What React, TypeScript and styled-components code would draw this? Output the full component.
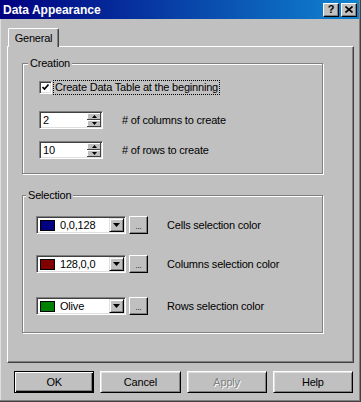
import styled, { createGlobalStyle } from "styled-components";

type GroupProps = {
  $height: number;
  $top?: number;
};

type LegendProps = {
  $indent: number;
};

type RowProps = {
  $top: number;
};

type PushButtonProps = {
  $default?: boolean;
  $disabled?: boolean;
};

const GlobalStyle = createGlobalStyle`
  body {
    margin: 0;
    font-family: "Liberation Sans", Arial, sans-serif;
  }
`;

const Window = styled.div`
  width: 361px;
  height: 402px;
  box-sizing: border-box;
  background: #c0c0c0;
  border-right: 1px solid #404040;
  border-bottom: 1px solid #404040;
  box-shadow: inset -1px -1px 0 #808080, inset 1px 0 0 #dfdfdf;
  display: flex;
  flex-direction: column;
  font-size: 11px;
  letter-spacing: -0.2px;
  color: #000;
`;

const TitleBar = styled.div`
  height: 19px;
  margin-right: 1px;
  padding: 0 2px 0 3px;
  background: linear-gradient(to right, #000080, #1084d0);
  display: flex;
  align-items: center;
  gap: 2px;
`;

const Title = styled.div`
  flex: 1;
  color: #fff;
  font-weight: bold;
  font-size: 12px;
  letter-spacing: 0;
`;

const CaptionButton = styled.div`
  width: 16px;
  height: 14px;
  box-sizing: border-box;
  background: #c0c0c0;
  border-top: 1px solid #fff;
  border-left: 1px solid #fff;
  border-right: 1px solid #000;
  border-bottom: 1px solid #000;
  box-shadow: inset -1px -1px 0 #808080;
  display: flex;
  align-items: center;
  justify-content: center;
  font-weight: bold;
  font-size: 11px;
  line-height: 1;
`;

const Body = styled.div`
  padding: 9px 6px 0 7px;
  display: flex;
  flex-direction: column;
`;

const TabStrip = styled.div`
  display: flex;
  padding-left: 1px;
`;

const Tab = styled.div`
  position: relative;
  z-index: 1;
  width: 51px;
  height: 19px;
  box-sizing: border-box;
  margin-bottom: -1px;
  background: #c0c0c0;
  border-top: 1px solid #fff;
  border-left: 1px solid #fff;
  border-right: 1px solid #404040;
  border-radius: 2px 2px 0 0;
  box-shadow: inset -1px 0 0 #808080;
  display: flex;
  align-items: center;
  justify-content: center;
`;

const Panel = styled.div`
  width: 347px;
  height: 317px;
  box-sizing: border-box;
  border-top: 1px solid #fff;
  border-left: 1px solid #fff;
  border-right: 1px solid #404040;
  border-bottom: 1px solid #404040;
  box-shadow: inset -1px -1px 0 #808080;
  padding: 10px 0 0 14px;
  display: flex;
  flex-direction: column;
`;

const Group = styled.fieldset<GroupProps>`
  margin: ${(p) => p.$top ?? 0}px 0 0 0;
  padding: 0;
  width: 301px;
  height: ${(p) => p.$height}px;
  box-sizing: border-box;
  min-width: 0;
  border: 1px solid #808080;
  box-shadow: inset 1px 1px 0 #fff, 1px 1px 0 #fff;
`;

const Legend = styled.legend<LegendProps>`
  margin-left: ${(p) => p.$indent}px;
  padding: 0 2px;
  line-height: 13px;
  background: #c0c0c0;
`;

const GroupBody = styled.div`
  display: flex;
  flex-direction: column;
`;

const CreationBody = styled(GroupBody)`
  padding: 10px 0 0 16px;
`;

const SelectionBody = styled(GroupBody)`
  padding: 14px 0 0 13px;
`;

const CheckRow = styled.div`
  display: flex;
  align-items: center;
  gap: 1px;
`;

const CheckBox = styled.div`
  width: 13px;
  height: 13px;
  box-sizing: border-box;
  background: #fff;
  border-top: 1px solid #808080;
  border-left: 1px solid #808080;
  border-right: 1px solid #fff;
  border-bottom: 1px solid #fff;
  box-shadow: inset 1px 1px 0 #404040, inset -1px -1px 0 #dfdfdf;
  display: flex;
  align-items: center;
  justify-content: center;
`;

const FocusLabel = styled.span`
  border: 1px dotted #000;
  padding: 0 1px;
  line-height: 13px;
`;

const FieldRow = styled.div<RowProps>`
  display: flex;
  align-items: center;
  margin-top: ${(p) => p.$top}px;
`;

const Spinner = styled.div`
  width: 64px;
  height: 18px;
  box-sizing: border-box;
  background: #fff;
  border-top: 1px solid #808080;
  border-left: 1px solid #808080;
  border-right: 1px solid #fff;
  border-bottom: 1px solid #fff;
  box-shadow: inset 1px 1px 0 #404040, inset -1px -1px 0 #dfdfdf;
  display: flex;
  padding: 1px;
`;

const SpinValue = styled.div`
  flex: 1;
  padding-left: 2px;
  line-height: 14px;
`;

const SpinButtons = styled.div`
  width: 14px;
  display: flex;
  flex-direction: column;
`;

const SpinButton = styled.div`
  flex: 1;
  background: #c0c0c0;
  box-shadow: inset -1px -1px 0 #404040, inset 1px 1px 0 #fff;
  display: flex;
  align-items: center;
  justify-content: center;
`;

const FieldLabel = styled.span`
  margin-left: 19px;
`;

const Combo = styled.div`
  width: 90px;
  height: 18px;
  box-sizing: border-box;
  background: #fff;
  border-top: 1px solid #808080;
  border-left: 1px solid #808080;
  border-right: 1px solid #fff;
  border-bottom: 1px solid #fff;
  box-shadow: inset 1px 1px 0 #404040, inset -1px -1px 0 #dfdfdf;
  display: flex;
  align-items: center;
  padding: 1px;
`;

const Swatch = styled.div<{ $color: string }>`
  width: 15px;
  height: 11px;
  margin-left: 2px;
  box-sizing: border-box;
  border: 1px solid #000;
  background: ${(p) => p.$color};
`;

const ComboText = styled.span`
  flex: 1;
  padding-left: 5px;
`;

const DropButton = styled.div`
  width: 15px;
  height: 14px;
  box-sizing: border-box;
  background: #c0c0c0;
  border-top: 1px solid #dfdfdf;
  border-left: 1px solid #dfdfdf;
  border-right: 1px solid #000;
  border-bottom: 1px solid #000;
  box-shadow: inset 1px 1px 0 #fff, inset -1px -1px 0 #808080;
  display: flex;
  align-items: center;
  justify-content: center;
`;

const DotsButton = styled.div`
  width: 19px;
  height: 18px;
  margin-left: 3px;
  box-sizing: border-box;
  background: #c0c0c0;
  border-top: 1px solid #fff;
  border-left: 1px solid #fff;
  border-right: 1px solid #000;
  border-bottom: 1px solid #000;
  box-shadow: inset -1px -1px 0 #808080;
  display: flex;
  align-items: flex-end;
  justify-content: center;
  font-size: 8px;
  line-height: 10px;
  padding-bottom: 1px;
`;

const ButtonRow = styled.div`
  display: grid;
  grid-template-columns: repeat(4, 1fr);
  column-gap: 6px;
  width: 339px;
  margin: 8px 0 0 7px;
`;

const PushButton = styled.div<PushButtonProps>`
  height: 22px;
  box-sizing: border-box;
  background: #c0c0c0;
  border-top: 1px solid ${(p) => (p.$default ? "#000" : "#fff")};
  border-left: 1px solid ${(p) => (p.$default ? "#000" : "#fff")};
  border-right: 1px solid #000;
  border-bottom: 1px solid #000;
  box-shadow: ${(p) =>
    p.$default
      ? "inset 1px 1px 0 #fff, inset -1px -1px 0 #000, inset -2px -2px 0 #808080"
      : "inset 1px 1px 0 #dfdfdf, inset -1px -1px 0 #808080"};
  display: flex;
  align-items: center;
  justify-content: center;
  color: ${(p) => (p.$disabled ? "#808080" : "#000")};
  text-shadow: ${(p) => (p.$disabled ? "1px 1px 0 #fff" : "none")};
`;

const Triangle = () => (
  <svg width="7" height="4" viewBox="0 0 7 4">
    <path d="M0 0h7L3.5 4z" fill="#000" />
  </svg>
);

const TinyArrow = ({ up }: { up?: boolean }) => (
  <svg width="5" height="3" viewBox="0 0 5 3">
    <path d={up ? "M2.5 0L5 3H0z" : "M0 0h5L2.5 3z"} fill="#000" />
  </svg>
);

const SpinField = ({ value, label, top }: { value: string; label: string; top: number }) => (
  <FieldRow $top={top}>
    <Spinner>
      <SpinValue>{value}</SpinValue>
      <SpinButtons>
        <SpinButton>
          <TinyArrow up />
        </SpinButton>
        <SpinButton>
          <TinyArrow />
        </SpinButton>
      </SpinButtons>
    </Spinner>
    <FieldLabel>{label}</FieldLabel>
  </FieldRow>
);

const ColorField = ({
  color,
  value,
  label,
  top,
}: {
  color: string;
  value: string;
  label: string;
  top: number;
}) => (
  <FieldRow $top={top}>
    <Combo>
      <Swatch $color={color} />
      <ComboText>{value}</ComboText>
      <DropButton>
        <Triangle />
      </DropButton>
    </Combo>
    <DotsButton>...</DotsButton>
    <FieldLabel>{label}</FieldLabel>
  </FieldRow>
);

const App = () => {
  return (
    <>
      <GlobalStyle />
      <Window>
        <TitleBar>
          <Title>Data Appearance</Title>
          <CaptionButton>?</CaptionButton>
          <CaptionButton>
            <svg width="8" height="7" viewBox="0 0 8 7">
              <path d="M0.5 0.5l7 6M7.5 0.5l-7 6" stroke="#000" strokeWidth="1.6" />
            </svg>
          </CaptionButton>
        </TitleBar>
        <Body>
          <TabStrip>
            <Tab>General</Tab>
          </TabStrip>
          <Panel>
            <Group $height={117}>
              <Legend $indent={5}>Creation</Legend>
              <CreationBody>
                <CheckRow>
                  <CheckBox>
                    <svg width="7" height="7" viewBox="0 0 7 7">
                      <path d="M0.5 3l2 2 4-4.5" stroke="#000" strokeWidth="1.6" fill="none" />
                    </svg>
                  </CheckBox>
                  <FocusLabel>Create Data Table at the beginning</FocusLabel>
                </CheckRow>
                <SpinField value="2" label="# of columns to create" top={16} />
                <SpinField value="10" label="# of rows to create" top={12} />
              </CreationBody>
            </Group>
            <Group $height={144} $top={15}>
              <Legend $indent={3}>Selection</Legend>
              <SelectionBody>
                <ColorField color="#000080" value="0,0,128" label="Cells selection color" top={0} />
                <ColorField color="#800000" value="128,0,0" label="Columns selection color" top={21} />
                <ColorField color="#008000" value="Olive" label="Rows selection color" top={24} />
              </SelectionBody>
            </Group>
          </Panel>
          <ButtonRow>
            <PushButton $default>OK</PushButton>
            <PushButton>Cancel</PushButton>
            <PushButton $disabled>Apply</PushButton>
            <PushButton>Help</PushButton>
          </ButtonRow>
        </Body>
      </Window>
    </>
  );
};

export default App;
